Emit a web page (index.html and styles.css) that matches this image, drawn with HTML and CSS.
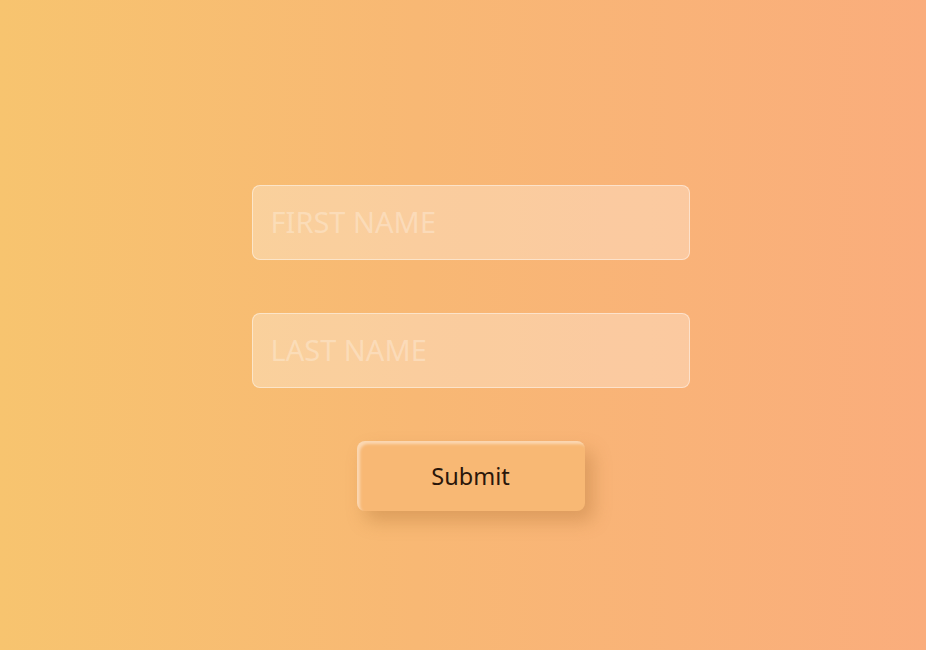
FILE: index.html
```html
<!DOCTYPE html>
<html>
<head>
<meta charset="utf-8">
<link rel="stylesheet" href="styles.css">
</head>
<body>
<form class="form">
  <input class="field" type="text" placeholder="FIRST NAME">
  <input class="field" type="text" placeholder="LAST NAME">
  <button class="submit" type="button">Submit</button>
</form>
</body>
</html>
```
FILE: styles.css
```css
html, body {
  margin: 0;
  height: 100%;
}
body {
  background: linear-gradient(90deg, #f7c46f 0%, #f8b874 45%, #faad7c 100%);
  font-family: "Noto Sans", "Open Sans", sans-serif;
}
.form {
  display: flex;
  flex-direction: column;
  align-items: center;
  padding: 185px 0 0 15px;
}
.field {
  box-sizing: border-box;
  width: 438px;
  height: 75px;
  margin-bottom: 53px;
  padding: 0 0 3px 18px;
  border: 1px solid rgba(255, 255, 255, 0.45);
  border-radius: 8px;
  background: rgba(255, 255, 255, 0.3);
  font-family: inherit;
  font-size: 29px;
  color: #3a2410;
  outline: none;
}
.field::placeholder {
  color: rgba(255, 255, 255, 0.28);
}
.submit {
  width: 228px;
  height: 70px;
  border: none;
  border-radius: 8px;
  background: #f8b874;
  font-family: inherit;
  font-size: 23.5px;
  color: #2a160a;
  box-shadow: inset 3px 3px 3px rgba(255, 255, 255, 0.45),
              8px 10px 18px rgba(170, 110, 50, 0.35);
  cursor: pointer;
}
```
